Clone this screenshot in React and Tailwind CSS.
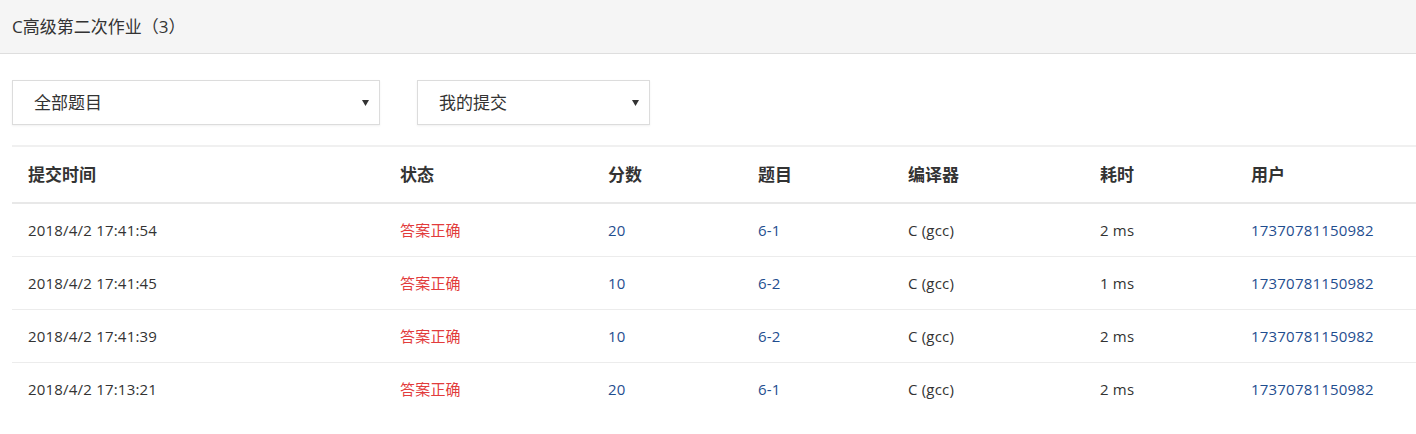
import React from 'react';

const rows = [
  { time: '2018/4/2 17:41:54', status: '答案正确', score: '20', problem: '6-1', compiler: 'C (gcc)', cost: '2 ms', user: '17370781150982' },
  { time: '2018/4/2 17:41:45', status: '答案正确', score: '10', problem: '6-2', compiler: 'C (gcc)', cost: '1 ms', user: '17370781150982' },
  { time: '2018/4/2 17:41:39', status: '答案正确', score: '10', problem: '6-2', compiler: 'C (gcc)', cost: '2 ms', user: '17370781150982' },
  { time: '2018/4/2 17:13:21', status: '答案正确', score: '20', problem: '6-1', compiler: 'C (gcc)', cost: '2 ms', user: '17370781150982' },
];

const cols = 'grid grid-cols-[372px_208px_150px_150px_192px_151px_1fr]';

const Select = ({ label, width }) => (
  <div className={`${width} h-[45px] flex items-center justify-between pl-[21px] pr-[9px] bg-white border border-[#dcdcdc] shadow-[0_1px_2px_rgba(0,0,0,0.06)] text-[17px] text-[#333]`}>
    <span>{label}</span>
    <svg width="7" height="6" viewBox="0 0 7 6" className="mr-[1px]">
      <path d="M0 0h7L3.5 6z" fill="#333" />
    </svg>
  </div>
);

export default function App() {
  return (
    <div className="w-[1416px] h-[434px] bg-white overflow-hidden font-['Open_Sans','Noto_Sans_CJK_SC',sans-serif] text-[#333]">
      <div className="h-[54px] bg-[#f5f5f5] border-b border-[#dedede] flex items-center px-3 text-[17px] text-[#333]">
        C高级第二次作业（3）
      </div>
      <div className="flex gap-[37px] pl-3 mt-[26px]">
        <Select label="全部题目" width="w-[368px]" />
        <Select label="我的提交" width="w-[233px]" />
      </div>
      <div className="ml-3 mt-5 border-t-2 border-[#f0f0f0]">
        <div className={`${cols} h-[57px] items-center border-b-2 border-[#e8e8e8] text-[17px] font-bold text-[#333]`}>
          {['提交时间', '状态', '分数', '题目', '编译器', '耗时', '用户'].map((h) => (
            <div key={h} className="px-4">{h}</div>
          ))}
        </div>
        {rows.map((r, i) => (
          <div key={i} className={`${cols} h-[53px] items-center text-[15px] tracking-[0.2px] ${i < rows.length - 1 ? 'border-b border-[#ececec]' : ''}`}>
            <div className="px-4 text-[#333]">{r.time}</div>
            <div className="px-4 text-[#e23c3c]">{r.status}</div>
            <div className="px-4 text-[#1f4e8f]">{r.score}</div>
            <div className="px-4 text-[#1f4e8f]">{r.problem}</div>
            <div className="px-4 text-[#333]">{r.compiler}</div>
            <div className="px-4 text-[#333]">{r.cost}</div>
            <div className="px-4 text-[#1f4e8f]">{r.user}</div>
          </div>
        ))}
      </div>
    </div>
  );
}
